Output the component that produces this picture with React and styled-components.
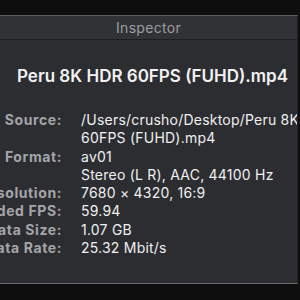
import React from 'react'
import styled, { createGlobalStyle } from 'styled-components'

const GlobalStyle = createGlobalStyle`
    html, body {
        margin: 0;
        padding: 0;
        background: #0e0e0f;
        overflow: hidden;
    }
    body {
        font-family: Inter, "Liberation Sans", sans-serif;
    }
`

const Screen = styled.div`
    width: 300px;
    height: 300px;
    padding-top: 15px;
    box-sizing: border-box;
`

const Panel = styled.div`
    width: 298px;
    height: 269px;
    background: #2c2d31;
    border-top: 1px solid #5c5d61;
    border-bottom: 1px solid #67686b;
    border-right: 1px solid #232427;
    box-sizing: border-box;
    display: flex;
    flex-direction: column;
    overflow: hidden;
`

const TitleBar = styled.div`
    height: 23px;
    display: flex;
    align-items: center;
    justify-content: center;
    background: #313236;
    border-bottom: 1px solid #1d1e21;
    color: #9c9da0;
    font-size: 14px;
    letter-spacing: 0.3px;
`

const FileName = styled.div`
    padding: 26px 0 0 17px;
    height: 44px;
    box-sizing: border-box;
    color: #f2f2f2;
    font-size: 17px;
    font-weight: 600;
    white-space: nowrap;
`

const Rows = styled.div`
    margin-top: 27px;
    display: grid;
    grid-template-columns: 62px 1fr;
    column-gap: 19px;
    font-size: 14px;
    line-height: 18.3px;
`

const Label = styled.div`
    display: flex;
    justify-content: flex-end;
    white-space: nowrap;
    color: #a4a5a8;
    font-weight: 700;
    letter-spacing: 0.6px;
`

const Value = styled.div`
    color: #f0f0f0;
    white-space: nowrap;
    letter-spacing: 0.22px;
`

const rows = [
    ['Source:', ['/Users/crusho/Desktop/Peru 8K', '60FPS (FUHD).mp4']],
    ['Format:', ['av01']],
    ['', ['Stereo (L R), AAC, 44100 Hz']],
    ['Resolution:', ['7680 × 4320, 16:9']],
    ['Recorded FPS:', ['59.94']],
    ['Data Size:', ['1.07 GB']],
    ['Data Rate:', ['25.32 Mbit/s']],
]

function App() {
    return (
        <Screen>
            <GlobalStyle />
            <Panel>
                <TitleBar>Inspector</TitleBar>
                <FileName>Peru 8K HDR 60FPS (FUHD).mp4</FileName>
                <Rows>
                    {rows.map(([label, lines], i) => (
                        <React.Fragment key={i}>
                            <Label><span>{label}</span></Label>
                            <Value>
                                {lines.map((line, j) => <div key={j}>{line}</div>)}
                            </Value>
                        </React.Fragment>
                    ))}
                </Rows>
            </Panel>
        </Screen>
    )
}

export default App
